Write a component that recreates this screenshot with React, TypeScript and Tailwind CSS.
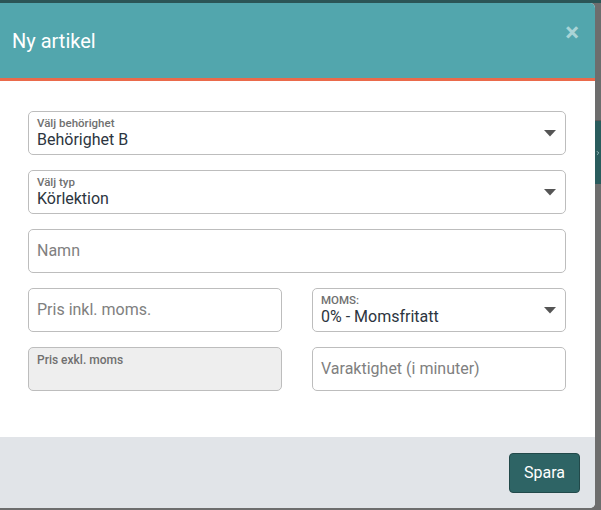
import { ChevronRight } from "lucide-react";

const Caret = () => (
  <svg width="12" height="7" viewBox="0 0 12 7" className="shrink-0">
    <path d="M0 0 L12 0 L6 6.5 Z" fill="#555" />
  </svg>
);

const SelectField = ({ label, value, w = "w-full" }: { label: string; value: string; w?: string }) => (
  <div className={`${w} h-[44px] border border-[#bdbdbd] rounded-[5px] bg-white flex items-center pl-[8px] pr-[9px]`}>
    <div className="flex-1 flex flex-col leading-none">
      <span className="text-[11.5px] text-[#707070] font-medium">{label}</span>
      <span className="text-[16px] text-[#2c3540] mt-[2px]">{value}</span>
    </div>
    <Caret />
  </div>
);

const TextField = ({ placeholder, w = "w-full" }: { placeholder: string; w?: string }) => (
  <div className={`${w} h-[44px] border border-[#bdbdbd] rounded-[5px] bg-white flex items-center px-[8px]`}>
    <span className="text-[16px] text-[#808080]">{placeholder}</span>
  </div>
);

export default function App() {
  return (
    <div className="w-[601px] h-[510px] bg-[#6d6d6d] flex flex-col overflow-hidden" style={{ fontFamily: "Roboto, 'Liberation Sans', sans-serif" }}>
      <div className="h-[3px] bg-[#2b5556] shrink-0" />
      <div className="flex flex-1">
        {/* modal */}
        <div className="w-[596px] h-[505px] bg-white rounded-r-[5px] flex flex-col overflow-hidden">
          <div className="h-[75px] bg-[#52a6ad] flex items-center justify-between pl-[12px] pr-[16px] shrink-0">
            <h1 className="text-[20px] text-white">Ny artikel</h1>
            <span className="text-[#a9d4d6] text-[26px] font-bold leading-none mb-[18px]">×</span>
          </div>
          <div className="h-[3px] bg-[#ea6a4b] shrink-0" />
          <div className="flex-1 px-[28px] pt-[30px] flex flex-col gap-[15px] w-[594px]">
            <SelectField label="Välj behörighet" value="Behörighet B" />
            <SelectField label="Välj typ" value="Körlektion" />
            <TextField placeholder="Namn" />
            <div className="flex gap-[30px]">
              <TextField placeholder="Pris inkl. moms." w="w-[254px]" />
              <SelectField label="MOMS:" value="0% - Momsfritatt" w="w-[254px]" />
            </div>
            <div className="flex gap-[30px]">
              <div className="w-[254px] h-[44px] border border-[#bdbdbd] rounded-[5px] bg-[#eeeeee] px-[8px] pt-[6px]">
                <span className="block text-[12px] text-[#707070] font-medium leading-none">Pris exkl. moms</span>
              </div>
              <TextField placeholder="Varaktighet (i minuter)" w="w-[254px]" />
            </div>
          </div>
          <div className="h-[71px] bg-[#e1e4e8] flex items-center justify-end pr-[15px] shrink-0">
            <button className="w-[71px] h-[40px] bg-[#2e6465] border border-[#22494a] rounded-[4px] text-white text-[16px]">Spara</button>
          </div>
        </div>
        {/* backdrop strip */}
        <div className="flex-1 flex flex-col">
          <div className="h-[118px] border-b border-[#5a5a5a]" />
          <div className="h-[63px] bg-[#2a5c5d] flex items-center">
            <ChevronRight size={6} color="#9bb" strokeWidth={4} />
          </div>
        </div>
      </div>
    </div>
  );
}
